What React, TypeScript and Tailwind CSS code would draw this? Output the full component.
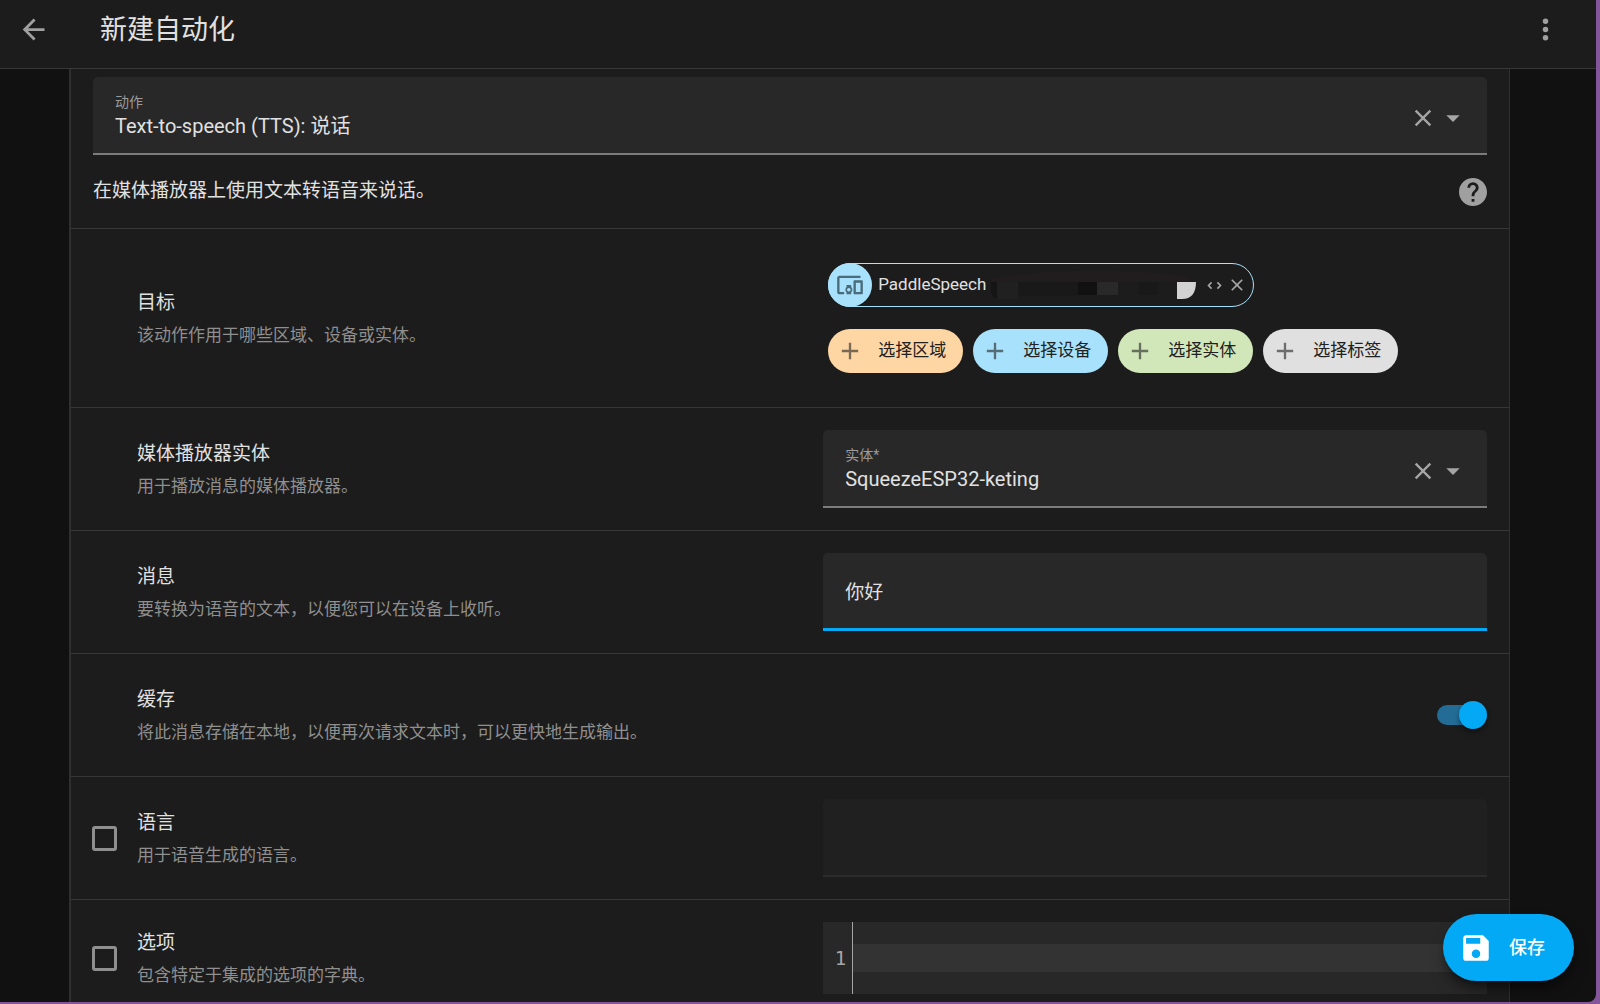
import React from "react";

const ICONS = {
  back: "M20,11V13H8L13.5,18.5L12.08,19.92L4.16,12L12.08,4.08L13.5,5.5L8,11H20Z",
  dots: "M12,16A2,2 0 0,1 14,18A2,2 0 0,1 12,20A2,2 0 0,1 10,18A2,2 0 0,1 12,16M12,10A2,2 0 0,1 14,12A2,2 0 0,1 12,14A2,2 0 0,1 10,12A2,2 0 0,1 12,10M12,4A2,2 0 0,1 14,6A2,2 0 0,1 12,8A2,2 0 0,1 10,6A2,2 0 0,1 12,4Z",
  close: "M19,6.41L17.59,5L12,10.59L6.41,5L5,6.41L10.59,12L5,17.59L6.41,19L12,13.41L17.59,19L19,17.59L13.41,12L19,6.41Z",
  caret: "M7,10L12,15L17,10H7Z",
  help: "M15.07,11.25L14.17,12.17C13.45,12.89 13,13.5 13,15H11V14.5C11,13.39 11.45,12.39 12.17,11.67L13.41,10.41C13.78,10.05 14,9.55 14,9C14,7.89 13.1,7 12,7A2,2 0 0,0 10,9H8A4,4 0 0,1 12,5A4,4 0 0,1 16,9C16,9.88 15.64,10.67 15.07,11.25M13,19H11V17H13M12,2A10,10 0 0,0 2,12A10,10 0 0,0 12,22A10,10 0 0,0 22,12C22,6.47 17.5,2 12,2Z",
  plus: "M19,13H13V19H11V13H5V11H11V5H13V11H19V13Z",
  save: "M15,9H5V5H15M12,19A3,3 0 0,1 9,16A3,3 0 0,1 12,13A3,3 0 0,1 15,16A3,3 0 0,1 12,19M17,3H5C3.89,3 3,3.9 3,5V19A2,2 0 0,0 5,21H19A2,2 0 0,0 21,19V7L17,3Z",
  expand: "M18.17,12L15,8.83L16.41,7.41L21,12L16.41,16.58L15,15.17M5.83,12L9,15.17L7.59,16.59L3,12L7.59,7.42L9,8.83L5.83,12Z",
  devices: "M3 6H21V4H3C1.9 4 1 4.9 1 6V18C1 19.1 1.9 20 3 20H7V18H3V6M13 12H9V13.78C8.39 14.33 8 15.11 8 16C8 16.89 8.39 17.67 9 18.22V20H13V18.22C13.61 17.67 14 16.88 14 16S13.61 14.33 13 13.78V12M11 17.5C10.17 17.5 9.5 16.83 9.5 16S10.17 14.5 11 14.5 12.5 15.17 12.5 16 11.83 17.5 11 17.5M22 8H16C15.5 8 15 8.5 15 9V19C15 19.5 15.5 20 16 20H22C22.5 20 23 19.5 23 19V9C23 8.5 22.5 8 22 8M21 18H17V10H21V18Z",
};

function Icon({ name, className, box = "0 0 24 24" }: { name: keyof typeof ICONS; className: string; box?: string }) {
  return (
    <svg viewBox={box} className={className} fill="currentColor" aria-hidden="true">
      <path d={ICONS[name]} />
    </svg>
  );
}

function ComboField({ id, label, value }: { id: string; label: string; value: string }) {
  return (
    <div className="flex h-[78px] w-full items-center rounded-t-[5px] border-b-2 border-[#7c7c7c] bg-[#282828] pr-[18px] pl-[22px]">
      <div className="flex min-w-0 flex-1 flex-col pt-[2px]">
        <label htmlFor={id} className="text-[14px] leading-[20px] text-[#9b9b9b]">
          {label}
        </label>
        <input id={id} role="combobox" aria-expanded="false" defaultValue={value} className="h-[28px] w-full bg-transparent text-[20px] leading-[28px] text-[#e1e1e1] outline-none" />
      </div>
      <div className="flex items-center pt-[6px] text-[#a5a5a5]">
        <button type="button" aria-label="清除">
          <Icon name="close" className="size-[28px]" />
        </button>
        <button type="button" aria-label="展开">
          <Icon name="caret" className="size-[32px]" />
        </button>
      </div>
    </div>
  );
}

type RowProps = { id: string; title: string; text: string; checkbox?: boolean; tall?: boolean; children: React.ReactNode };

function SettingRow({ id, title, text, checkbox, tall, children }: RowProps) {
  return (
    <div className={`flex items-center border-t border-[#373737] px-[22px] ${tall ? "py-[34px]" : "py-[22px]"}`}>
      <div className="flex flex-1 items-center">
        <div className="w-[44px] shrink-0">
          {checkbox && (
            <input type="checkbox" id={`${id}-on`} className="-ml-px block size-[25px] appearance-none rounded-[3px] border-3 border-[#8f8f8f]" />
          )}
        </div>
        <label htmlFor={checkbox ? `${id}-on` : id} className="flex flex-col pt-[2px]">
          <span className="text-[19px] leading-[32px] text-[#e1e1e1]">{title}</span>
          <span className="text-[17px] leading-[32px] text-[#8f8f8f]">{text}</span>
        </label>
      </div>
      <div className="w-10/21 shrink-0">{children}</div>
    </div>
  );
}

const PICKERS = [
  { label: "选择区域", color: "bg-[#fed6a4]" },
  { label: "选择设备", color: "bg-[#a8e1fb]" },
  { label: "选择实体", color: "bg-[#d2e7b9]" },
  { label: "选择标签", color: "bg-[#e0e0e0]" },
];

function TargetPicker() {
  return (
    <div className="flex flex-col items-start gap-[22px] pl-[5px]">
      <div className="flex h-[44px] w-[426px] items-center rounded-full border border-[#a8e1fb] pr-[6px]">
        <span className="-my-px -ml-px flex size-[44px] shrink-0 items-center justify-center rounded-full bg-[#a8e1fb] text-[#4a6b7a]">
          <Icon name="devices" className="size-[28px]" />
        </span>
        <span className="pl-[6px] text-[17px] text-[#e1e1e1]">PaddleSpeech</span>
        <svg viewBox="-2 3 212 36" className="h-[36px] w-[212px] shrink-0" aria-hidden="true">
          <path d="M4 14Q100 0 200 12V18H4Z" fill="#211d1e" />
          <path d="M3 18H9V35Q4 32 3 28Z" fill="#151515" />
          <rect x="9" y="18" width="21" height="17" fill="#202020" />
          <rect x="30" y="18" width="60" height="14" fill="#191919" />
          <rect x="90" y="18" width="19" height="13" fill="#111111" />
          <rect x="109" y="18" width="21" height="13" fill="#292929" />
          <rect x="150" y="18" width="20" height="13" fill="#191919" />
          <path d="M189 18H208Q208 35 194 35H189Z" fill="#d2d2d2" />
        </svg>
        <span className="flex flex-1 items-center justify-end gap-[3px] text-[#a5a5a5]">
          <button type="button" id="target" aria-label="展开设备">
            <Icon name="expand" className="size-[19px]" />
          </button>
          <button type="button" aria-label="移除">
            <Icon name="close" className="size-[20px]" />
          </button>
        </span>
      </div>
      <div className="flex flex-wrap gap-[10px]">
        {PICKERS.map((p) => (
          <button key={p.label} type="button" className={`flex h-[44px] items-center gap-[14px] rounded-full pr-[17px] pl-[8px] text-[17px] text-[#212121] ${p.color}`}>
            <Icon name="plus" className="size-[28px] shrink-0 opacity-60" />
            {p.label}
          </button>
        ))}
      </div>
    </div>
  );
}

export default function App() {
  return (
    <div className="h-screen overflow-hidden bg-[#84559b] pr-[4px] pb-[2px] font-[Roboto,'Noto_Sans_CJK_SC',sans-serif]">
      <div className="relative flex h-full flex-col overflow-hidden rounded-br-[8px] bg-[#111111]">
        <header className="flex h-[69px] shrink-0 items-center border-b border-[#373737] bg-[#1c1c1c] pr-[34px] pb-[9px] pl-[17px] text-[#a0a0a0]">
          <button type="button" aria-label="返回">
            <Icon name="back" className="size-[33px]" />
          </button>
          <h1 className="flex-1 pl-[50px] text-[27px] leading-[40px] text-[#e1e1e1]">新建自动化</h1>
          <button type="button" aria-label="更多">
            <Icon name="dots" className="size-[33px]" />
          </button>
        </header>

        <main className="mr-[86px] ml-[69px] flex-1 overflow-hidden border-r border-l-2 border-[#2f2f2f] bg-[#1c1c1c]">
          <div className="px-[22px] pt-[8px]">
            <ComboField id="action" label="动作" value="Text-to-speech (TTS): 说话" />
          </div>
          <div className="flex h-[73px] items-center justify-between px-[22px]">
            <p className="text-[19px] text-[#e1e1e1]">在媒体播放器上使用文本转语音来说话。</p>
            <a href="#help" aria-label="帮助" className="text-[#a0a0a0]">
              <Icon name="help" box="2 2 20 20" className="size-[28px]" />
            </a>
          </div>

          <SettingRow id="target" title="目标" text="该动作作用于哪些区域、设备或实体。" tall>
            <TargetPicker />
          </SettingRow>
          <SettingRow id="entity" title="媒体播放器实体" text="用于播放消息的媒体播放器。">
            <ComboField id="entity" label="实体*" value="SqueezeESP32-keting" />
          </SettingRow>
          <SettingRow id="message" title="消息" text="要转换为语音的文本，以便您可以在设备上收听。">
            <input id="message" defaultValue="你好" className="block h-[78px] w-full rounded-t-[5px] border-b-3 border-[#03a9f4] bg-[#282828] px-[22px] text-[19px] text-[#e1e1e1] outline-none" />
          </SettingRow>
          <SettingRow id="cache" title="缓存" text="将此消息存储在本地，以便再次请求文本时，可以更快地生成输出。">
            <div className="flex h-[78px] items-center justify-end">
              <label className="flex h-[28px] w-[50px] items-center">
                <input id="cache" type="checkbox" role="switch" defaultChecked className="peer sr-only" />
                <span className="flex h-[20px] w-[45px] items-center rounded-full bg-[#226c96]">
                  <span className="ml-[22px] size-[28px] shrink-0 rounded-full bg-[#03a9f4] shadow-md shadow-black/40" />
                </span>
              </label>
            </div>
          </SettingRow>
          <SettingRow id="language" title="语言" text="用于语音生成的语言。" checkbox>
            <input disabled aria-label="语言" className="block h-[78px] w-full rounded-t-[5px] border-b-2 border-[#2b2b2b] bg-[#202020] px-[22px]" />
          </SettingRow>
          <SettingRow id="options" title="选项" text="包含特定于集成的选项的字典。" checkbox>
            <div className="flex h-[72px] bg-[#282828]">
              <div className="flex w-[30px] items-center justify-end border-r border-[#a5a5a5] pr-[6px] font-['DejaVu_Sans_Mono',monospace] text-[19px] text-[#a5a5a5]">1</div>
              <div className="flex flex-1 items-center">
                <input aria-label="选项" className="h-[28px] w-full bg-[#333333] px-2 text-[19px] text-[#e1e1e1] outline-none" />
              </div>
            </div>
          </SettingRow>
        </main>

        <button type="button" className="absolute right-[22px] bottom-[21px] flex h-[67px] w-[131px] items-center gap-[16px] rounded-full bg-[#03a9f4] pl-[16px] text-[18px] font-medium text-white shadow-lg shadow-black/50">
          <Icon name="save" className="size-[34px]" />
          保存
        </button>
      </div>
    </div>
  );
}
